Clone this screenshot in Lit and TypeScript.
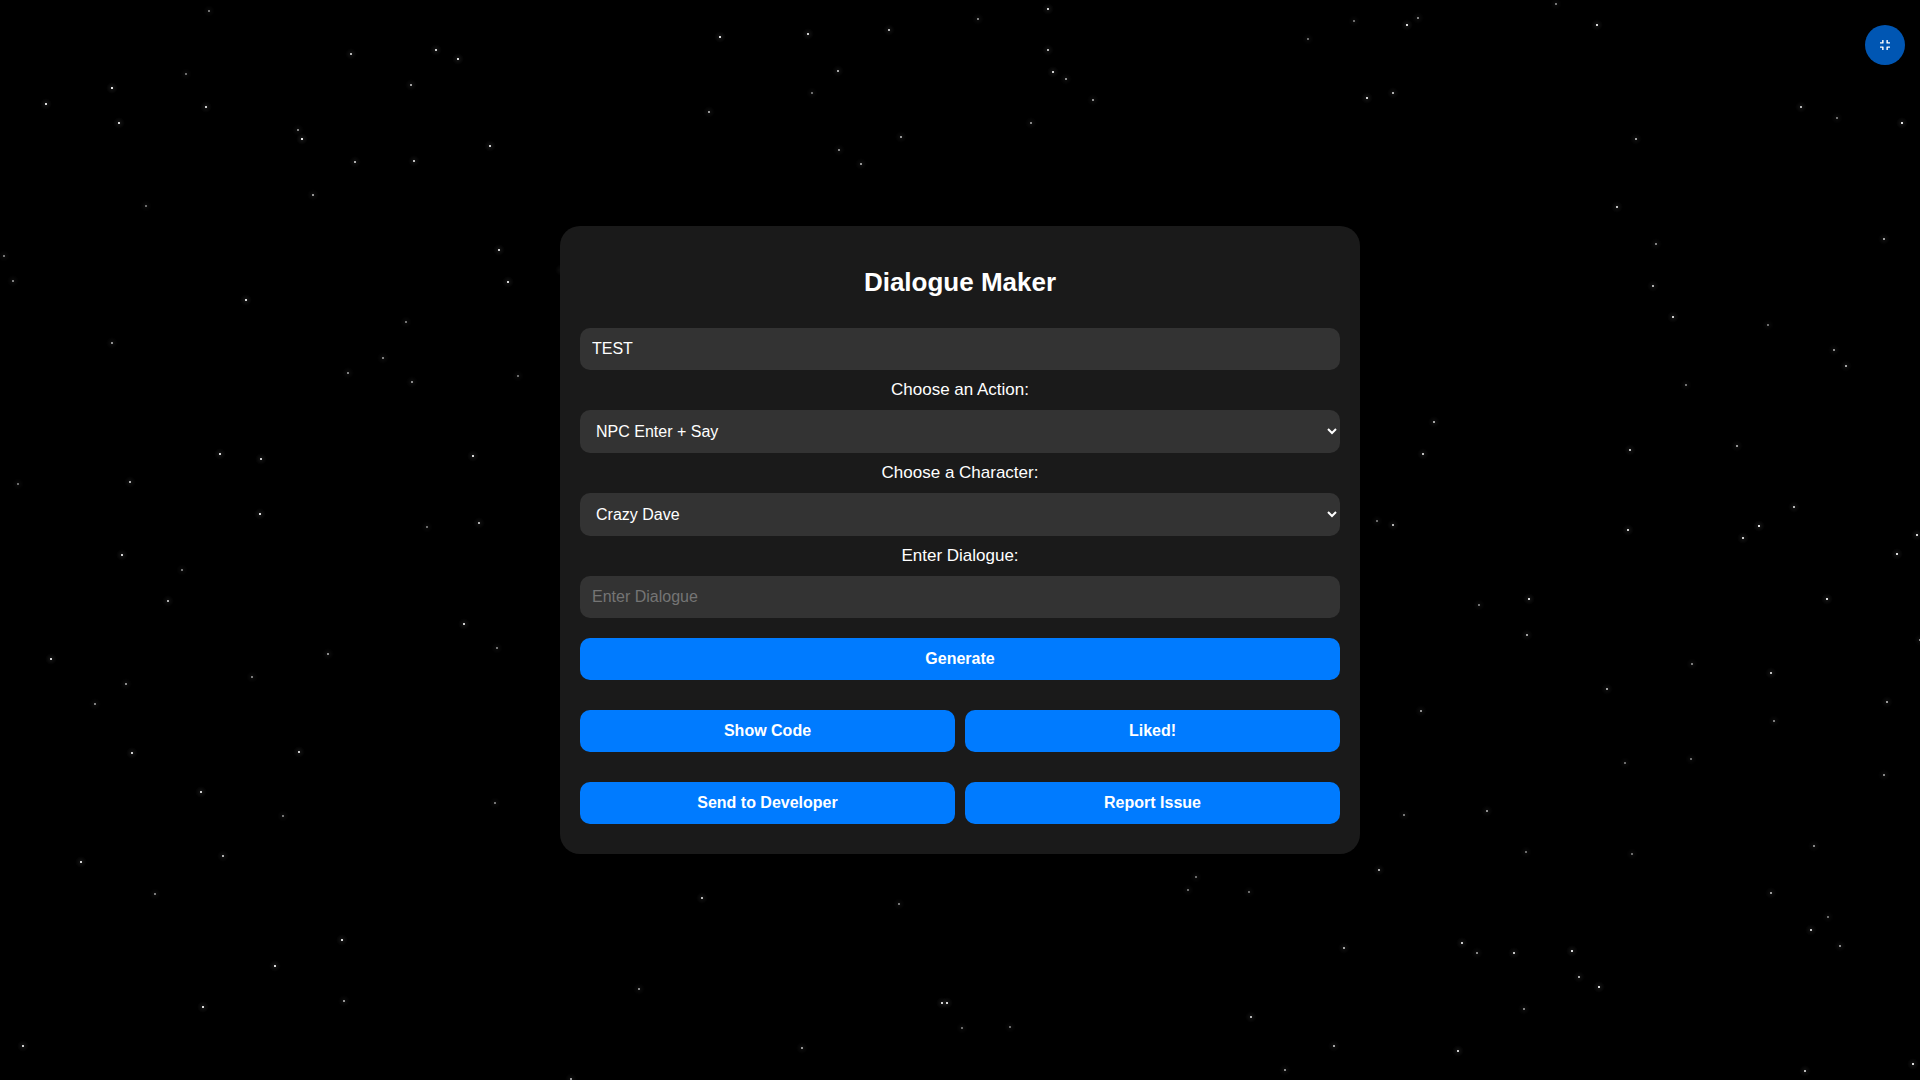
import { LitElement, html, svg, css } from "lit";
import { customElement, state } from "lit/decorators.js";

/** Each star: centre x, centre y, brightness in percent. */
const STARS: [number, number, number][] = [
  [209, 11, 45], [351, 54, 70], [436, 50, 80], [458, 59, 85], [186, 74, 42], [112, 88, 90], [411, 85, 62],
  [46, 104, 86], [206, 107, 80], [119, 123, 84], [298, 130, 50], [302, 139, 90], [490, 146, 80], [414, 161, 74],
  [355, 162, 68], [313, 195, 58], [146, 206, 42], [4, 256, 45], [499, 250, 80], [13, 281, 50], [508, 282, 84],
  [246, 300, 85], [406, 322, 45], [112, 343, 56], [383, 358, 50], [348, 373, 50], [412, 382, 54], [518, 376, 42],
  [220, 454, 84], [261, 459, 78], [473, 456, 84], [18, 484, 42], [130, 482, 68], [260, 514, 86], [479, 523, 68],
  [427, 527, 42], [122, 555, 82], [182, 570, 45], [168, 601, 68], [464, 624, 80], [51, 659, 82], [497, 648, 45],
  [328, 654, 54], [252, 677, 48], [126, 684, 54], [95, 704, 50], [132, 753, 80], [299, 752, 80], [201, 792, 80],
  [283, 816, 45], [495, 803, 45], [223, 856, 68], [81, 862, 82], [155, 894, 48], [342, 940, 85], [275, 966, 85],
  [203, 1007, 86], [344, 1001, 58], [23, 1046, 80], [1048, 9, 80], [978, 19, 50], [889, 30, 70], [720, 37, 86],
  [808, 34, 80], [1048, 50, 70], [1053, 72, 80], [1066, 79, 55], [838, 71, 65], [812, 93, 42], [709, 112, 60],
  [1093, 100, 55], [1031, 123, 52], [901, 137, 58], [839, 150, 52], [861, 164, 58], [1308, 39, 42],
  [1354, 21, 42], [561, 270, 60], [702, 898, 72], [899, 904, 46], [1196, 877, 42], [1188, 890, 42],
  [1249, 892, 42], [1344, 948, 64], [639, 989, 52], [942, 1003, 82], [947, 1003, 84], [962, 1028, 42],
  [1010, 1027, 42], [802, 1048, 58], [1251, 1017, 70], [1334, 1046, 64], [1285, 1070, 54], [571, 1079, 60],
  [1556, 4, 46], [1418, 18, 50], [1407, 25, 86], [1597, 25, 84], [1393, 93, 68], [1367, 98, 82], [1801, 107, 70],
  [1837, 118, 44], [1902, 123, 88], [1636, 139, 62], [1617, 207, 76], [1656, 244, 50], [1884, 239, 62],
  [1653, 286, 68], [1673, 317, 80], [1768, 325, 42], [1834, 350, 54], [1846, 366, 64], [1686, 385, 44],
  [1434, 422, 64], [1423, 454, 74], [1630, 450, 72], [1737, 446, 58], [1794, 507, 70], [1377, 521, 42],
  [1393, 525, 70], [1759, 526, 88], [1628, 530, 80], [1743, 538, 80], [1917, 535, 82], [1897, 554, 86],
  [1529, 599, 84], [1479, 605, 45], [1827, 599, 86], [1527, 635, 62], [1920, 640, 55], [1692, 664, 48],
  [1771, 673, 74], [1607, 689, 62], [1887, 702, 60], [1421, 711, 56], [1774, 721, 48], [1625, 763, 42],
  [1691, 759, 42], [1884, 775, 52], [1487, 811, 56], [1404, 815, 46], [1526, 852, 42], [1632, 854, 42],
  [1814, 846, 52], [1379, 870, 66], [1771, 893, 60], [1828, 917, 42], [1811, 930, 76], [1840, 946, 54],
  [1462, 943, 78], [1477, 953, 52], [1514, 953, 76], [1572, 951, 86], [1579, 977, 66], [1599, 987, 86],
  [1524, 1009, 50], [1458, 1051, 80], [1805, 1071, 72], [1913, 1064, 86],
];

@customElement("star-field")
export class StarField extends LitElement {
  static styles = css`
    :host { display: block; }
    .sky { display: block; width: 100%; height: 100%; }
  `;

  render() {
    return html`
      <svg class="sky" viewBox="0 0 1920 1080" preserveAspectRatio="xMidYMid slice" aria-hidden="true">
        <defs>
          <radialGradient id="glow">
            <stop offset="0" stop-color="#fff" stop-opacity="0.1" />
            <stop offset="0.4" stop-color="#fff" stop-opacity="0.06" />
            <stop offset="1" stop-color="#fff" stop-opacity="0" />
          </radialGradient>
        </defs>
        ${STARS.map(
          ([x, y, level]) => svg`
            <g opacity=${level / 100}>
              <circle cx=${x} cy=${y} r="6" fill="url(#glow)" />
              <rect x=${x - 1} y=${y - 1} width="2" height="2" fill="#fff" />
            </g>`
        )}
      </svg>
    `;
  }
}

@customElement("app-root")
export class AppRoot extends LitElement {
  static styles = css`
    :host {
      display: block;
      position: relative;
      background: #000;
      color: #fff;
      font-family: Arial, "Liberation Sans", sans-serif;
      font-size: 16px;
    }
    * { box-sizing: border-box; }
    .stars { position: absolute; inset: 0; overflow: hidden; }
    .page {
      position: relative;
      display: flex;
      align-items: center;
      justify-content: center;
      min-height: 100vh;
    }
    .card {
      width: 100%;
      max-width: 800px;
      padding: 20px 20px 30px;
      border-radius: 20px;
      background: #1a1a1a;
      text-align: center;
    }
    .title { margin: 21px 0 31px; font-size: 26px; line-height: 30px; font-weight: bold; }
    .form { display: flex; flex-direction: column; gap: 10px; }
    .label { font-size: 17px; line-height: 20px; }
    .field {
      display: block;
      width: 100%;
      margin: 0;
      padding: 12px;
      border: none;
      border-radius: 10px;
      background: #333;
      color: #fff;
      font-family: inherit;
      font-size: 16px;
    }
    .text { height: 42px; }
    .text::placeholder { color: #757575; }
    .choice { height: 43px; }
    .actions {
      display: grid;
      grid-template-columns: repeat(2, 1fr);
      gap: 30px 10px;
      margin-top: 10px;
    }
    .button {
      height: 42px;
      padding: 12px;
      border: none;
      border-radius: 10px;
      background: #007bff;
      color: #fff;
      font-family: inherit;
      font-size: 16px;
      line-height: 18px;
      font-weight: bold;
      cursor: pointer;
    }
    .button:hover { background: #0056b3; }
    .wide { grid-column: 1 / -1; }
    .screen-toggle {
      position: absolute;
      top: 25px;
      right: 15px;
      display: flex;
      align-items: center;
      justify-content: center;
      width: 40px;
      height: 40px;
      padding: 0;
      border: none;
      border-radius: 50%;
      background: #0056b3;
      color: #fff;
      cursor: pointer;
    }
    .icon { display: block; width: 10px; height: 10px; fill: currentColor; }
  `;

  @state() private heading = "TEST";

  render() {
    return html`
      <star-field class="stars"></star-field>
      <main class="page">
        <section class="card">
          <h1 class="title">Dialogue Maker</h1>
          <form class="form" @submit=${(e: Event) => e.preventDefault()}>
            <input
              class="field text"
              type="text"
              aria-label="Title"
              .value=${this.heading}
              @input=${(e: Event) => (this.heading = (e.target as HTMLInputElement).value)}
            />
            <label class="label" for="action">Choose an Action:</label>
            <select class="field choice" id="action">
              <option>NPC Enter + Say</option>
            </select>
            <label class="label" for="character">Choose a Character:</label>
            <select class="field choice" id="character">
              <option>Crazy Dave</option>
            </select>
            <label class="label" for="dialogue">Enter Dialogue:</label>
            <input class="field text" id="dialogue" type="text" placeholder="Enter Dialogue" />
            <div class="actions">
              <button class="button wide" type="submit">Generate</button>
              <button class="button" type="button">Show Code</button>
              <button class="button" type="button">Liked!</button>
              <button class="button" type="button">Send to Developer</button>
              <button class="button" type="button">Report Issue</button>
            </div>
          </form>
        </section>
      </main>
      <button class="screen-toggle" type="button" aria-label="Exit full screen">
        <svg class="icon" viewBox="0 32 448 448" aria-hidden="true">
          <path
            d="M436 192H312c-13.3 0-24-10.7-24-24V44c0-6.6 5.4-12 12-12h40c6.6 0 12 5.4 12 12v84h84c6.6 0 12 5.4 12 12v40c0 6.6-5.4 12-12 12zm-276-24V44c0-6.6-5.4-12-12-12h-40c-6.6 0-12 5.4-12 12v84H12c-6.6 0-12 5.4-12 12v40c0 6.6 5.4 12 12 12h124c13.3 0 24-10.7 24-24zm0 300V344c0-13.3-10.7-24-24-24H12c-6.6 0-12 5.4-12 12v40c0 6.6 5.4 12 12 12h84v84c0 6.6 5.4 12 12 12h40c6.6 0 12-5.4 12-12zm192 0v-84h84c6.6 0 12-5.4 12-12v-40c0-6.6-5.4-12-12-12H312c-13.3 0-24 10.7-24 24v124c0 6.6 5.4 12 12 12h40c6.6 0 12-5.4 12-12z"
          />
        </svg>
      </button>
    `;
  }
}
